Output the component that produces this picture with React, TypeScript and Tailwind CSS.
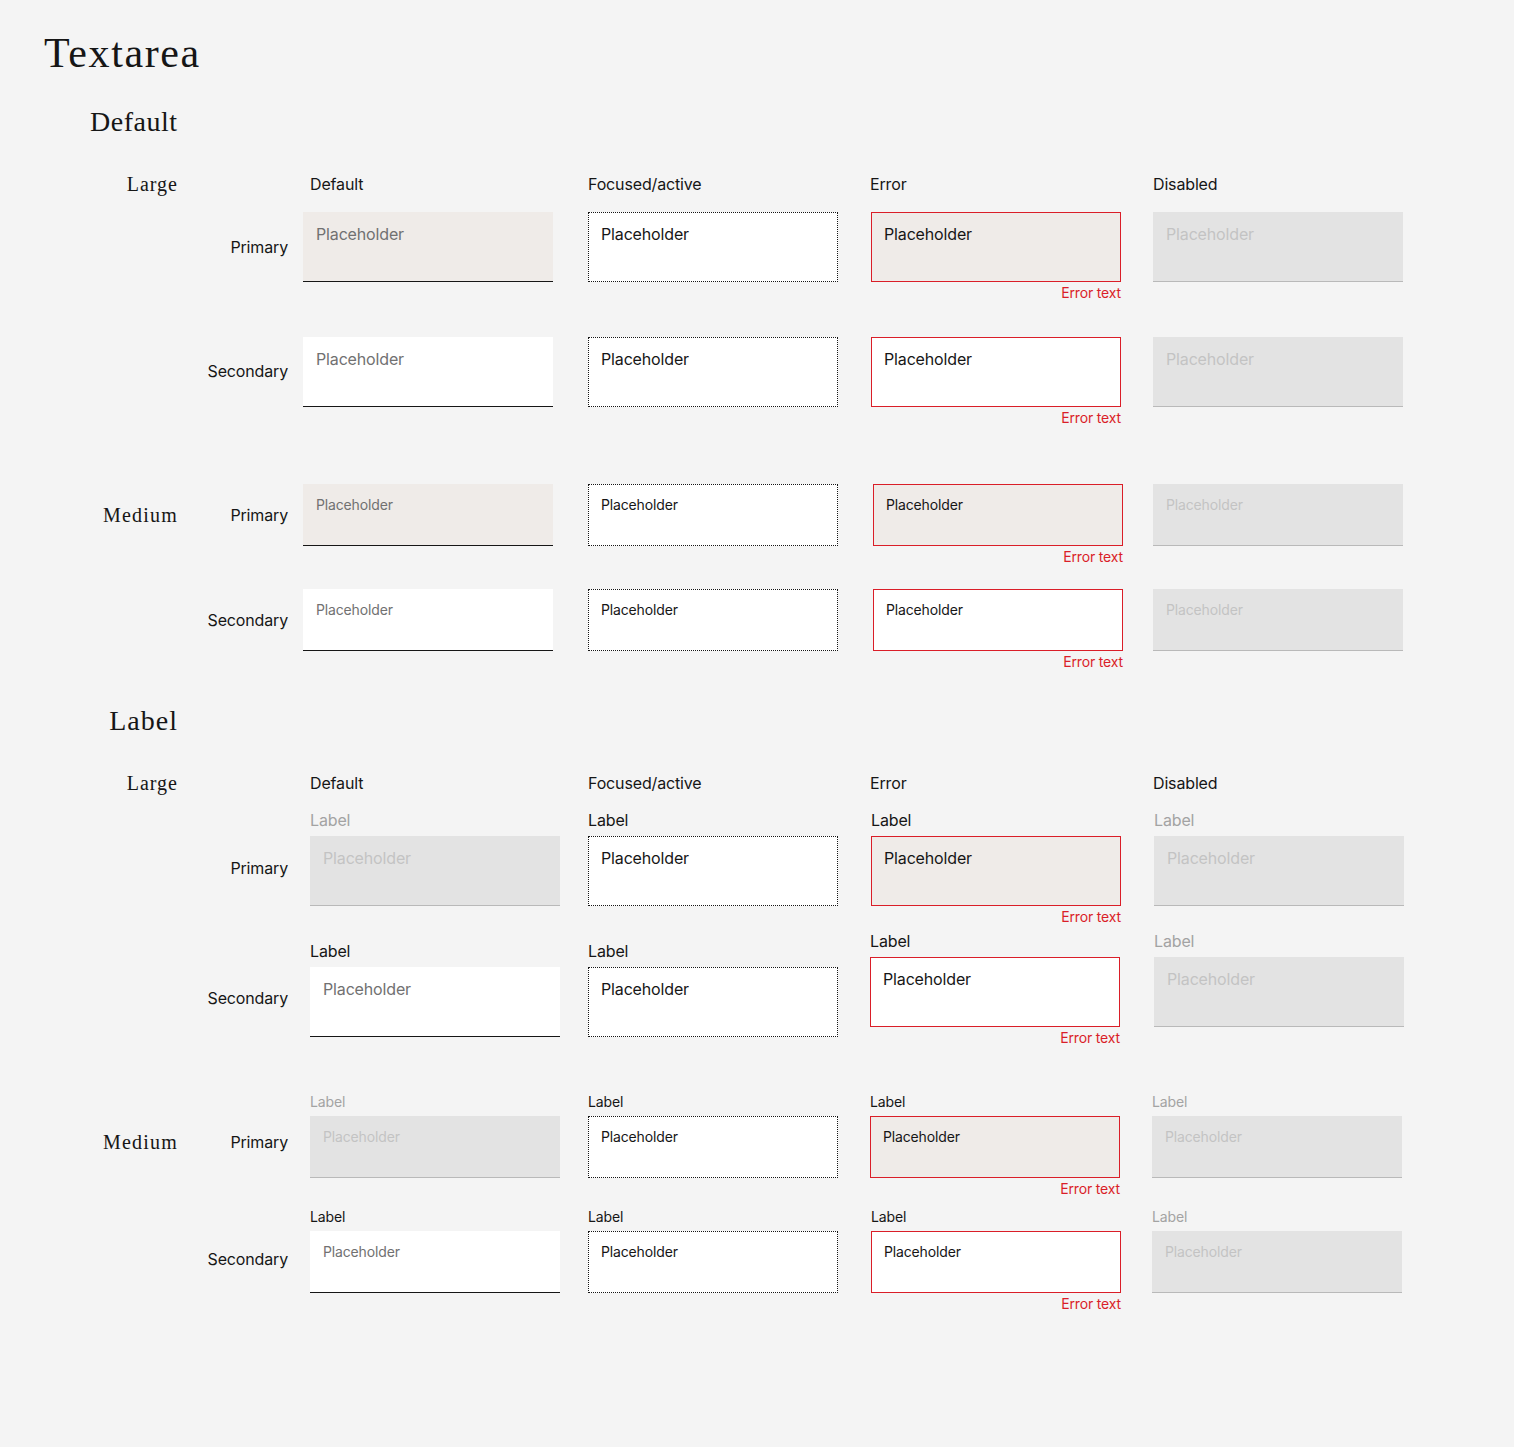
import type { ReactNode } from "react";

type Variant = "primary" | "secondary";
type State = "default" | "focused" | "error" | "disabled";
type Size = "lg" | "md";

const serif = { fontFamily: '"Liberation Serif", "DejaVu Serif", serif' };

function boxClass(variant: Variant, state: State) {
  if (state === "focused") return "bg-white border border-dotted border-[#161616]";
  if (state === "error")
    return variant === "primary"
      ? "bg-[#efebe8] border border-[#da1e28]"
      : "bg-white border border-[#da1e28]";
  if (state === "disabled") return "bg-[#e3e3e3] border-b border-[#b9b9b9]";
  return variant === "primary"
    ? "bg-[#efebe8] border-b border-[#161616]"
    : "bg-white border-b border-[#161616]";
}

function textColor(state: State) {
  if (state === "default") return "text-[#717171]";
  if (state === "disabled") return "text-[#c3c3c3]";
  return "text-[#161616]";
}

function Field({
  variant,
  state,
  size,
  label,
  className = "",
}: {
  variant: Variant;
  state: State;
  size: Size;
  label?: boolean;
  className?: string;
}) {
  const lg = size === "lg";
  const bordered = state === "focused" || state === "error";
  return (
    <div className={`flex w-[250px] flex-col ${className}`}>
      {label && (
        <div
          className={`mb-[6px] ${lg ? "text-[16px] leading-[20px]" : "text-[14px] leading-[16px]"} ${
            state === "disabled" ? "text-[#a3a3a3]" : "text-[#161616]"
          }`}
        >
          Label
        </div>
      )}
      <div
        className={`box-border w-[250px] ${lg ? "h-[70px] text-[16px] leading-[20px]" : "h-[62px] text-[14px] leading-[18px]"} ${boxClass(
          variant,
          state
        )} ${textColor(state)} ${bordered ? "px-[12px]" : "px-[13px]"} ${
          lg ? (bordered ? "pt-[11px]" : "pt-[12px]") : bordered ? "pt-[11px]" : "pt-[12px]"
        }`}
      >
        Placeholder
      </div>
      {state === "error" && (
        <div className="mt-[3px] text-right text-[14px] leading-[16px] text-[#da1e28]">Error text</div>
      )}
    </div>
  );
}

function Row({
  section,
  rowLabel,
  labelMt,
  className = "",
  children,
}: {
  section?: string;
  rowLabel: string;
  labelMt: string;
  className?: string;
  children: ReactNode;
}) {
  return (
    <div className={`grid grid-cols-[178px_110px_300px_283px_282px_260px] items-start ${className}`}>
      <div
        className={`text-right text-[20px] leading-[24px] tracking-[1.2px] text-[#161616] ${labelMt}`}
        style={serif}
      >
        {section}
      </div>
      <div className={`text-right text-[16px] leading-[24px] text-[#161616] ${labelMt}`}>{rowLabel}</div>
      {children}
    </div>
  );
}

function HeaderRow({ className = "" }: { className?: string }) {
  return (
    <div
      className={`grid grid-cols-[178px_110px_300px_283px_282px_260px] items-center text-[16px] leading-[24px] text-[#161616] ${className}`}
    >
      <div className="text-right text-[20px] tracking-[1px]" style={serif}>
        Large
      </div>
      <div />
      <div className="ml-[22px]">Default</div>
      <div>Focused/active</div>
      <div className="-ml-px">Error</div>
      <div>Disabled</div>
    </div>
  );
}

export default function App() {
  return (
    <div
      className="min-h-screen bg-[#f4f4f4] pb-[135px] tracking-[-0.15px] text-[#161616]"
      style={{ fontFamily: 'Inter, "Noto Sans", sans-serif' }}
    >
      <h1 className="pl-[44px] pt-[29px] text-[42px] leading-[48px] tracking-[1.6px]" style={serif}>
        Textarea
      </h1>

      {/* Default */}
      <h2 className="mt-[29px] pl-[90px] text-[28px] leading-[32px] tracking-[0.5px]" style={serif}>
        Default
      </h2>
      <HeaderRow className="mt-[34px]" />

      <Row rowLabel="Primary" labelMt="mt-[23px]" className="mt-[16px]">
        <Field variant="primary" state="default" size="lg" className="ml-[15px]" />
        <Field variant="primary" state="focused" size="lg" />
        <Field variant="primary" state="error" size="lg" />
        <Field variant="primary" state="disabled" size="lg" />
      </Row>
      <Row rowLabel="Secondary" labelMt="mt-[22px]" className="mt-[36px]">
        <Field variant="secondary" state="default" size="lg" className="ml-[15px]" />
        <Field variant="secondary" state="focused" size="lg" />
        <Field variant="secondary" state="error" size="lg" />
        <Field variant="secondary" state="disabled" size="lg" />
      </Row>

      <Row section="Medium" rowLabel="Primary" labelMt="mt-[19px]" className="mt-[58px]">
        <Field variant="primary" state="default" size="md" className="ml-[15px]" />
        <Field variant="primary" state="focused" size="md" />
        <Field variant="primary" state="error" size="md" className="ml-[2px]" />
        <Field variant="primary" state="disabled" size="md" />
      </Row>
      <Row rowLabel="Secondary" labelMt="mt-[19px]" className="mt-[24px]">
        <Field variant="secondary" state="default" size="md" className="ml-[15px]" />
        <Field variant="secondary" state="focused" size="md" />
        <Field variant="secondary" state="error" size="md" className="ml-[2px]" />
        <Field variant="secondary" state="disabled" size="md" />
      </Row>

      {/* Label */}
      <h2
        className="mt-[35px] w-[178px] text-right text-[28px] leading-[32px] tracking-[1px]"
        style={serif}
      >
        Label
      </h2>
      <HeaderRow className="mt-[34px]" />

      <Row rowLabel="Primary" labelMt="mt-[46px]" className="mt-[15px]">
        <Field variant="primary" state="disabled" size="lg" label className="ml-[22px]" />
        <Field variant="primary" state="focused" size="lg" label />
        <Field variant="primary" state="error" size="lg" label />
        <Field variant="primary" state="disabled" size="lg" label className="ml-px" />
      </Row>
      <Row rowLabel="Secondary" labelMt="mt-[55px]" className="mt-[6px]">
        <Field variant="secondary" state="default" size="lg" label className="ml-[22px] mt-[10px]" />
        <Field variant="secondary" state="focused" size="lg" label className="mt-[10px]" />
        <Field variant="secondary" state="error" size="lg" label className="-ml-px" />
        <Field variant="secondary" state="disabled" size="lg" label className="ml-px" />
      </Row>

      <Row section="Medium" rowLabel="Primary" labelMt="mt-[36px]" className="mt-[48px]">
        <Field variant="primary" state="disabled" size="md" label className="ml-[22px]" />
        <Field variant="primary" state="focused" size="md" label />
        <Field variant="primary" state="error" size="md" label className="-ml-px" />
        <Field variant="primary" state="disabled" size="md" label className="-ml-px" />
      </Row>
      <Row rowLabel="Secondary" labelMt="mt-[38px]" className="mt-[12px]">
        <Field variant="secondary" state="default" size="md" label className="ml-[22px]" />
        <Field variant="secondary" state="focused" size="md" label />
        <Field variant="secondary" state="error" size="md" label />
        <Field variant="secondary" state="disabled" size="md" label className="-ml-px" />
      </Row>
    </div>
  );
}
